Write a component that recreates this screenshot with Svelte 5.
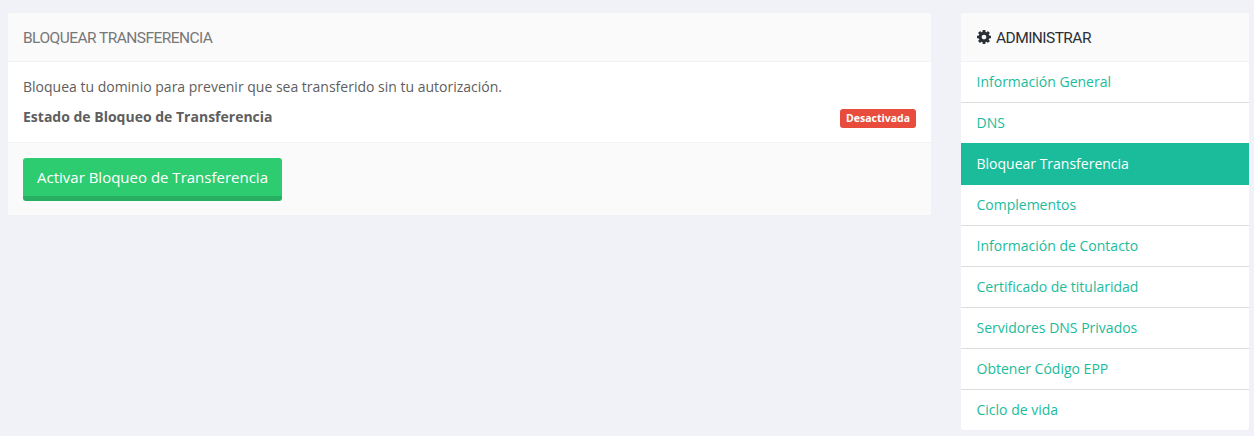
<script>
    let links = [
        'Información General',
        'DNS',
        'Bloquear Transferencia',
        'Complementos',
        'Información de Contacto',
        'Certificado de titularidad',
        'Servidores DNS Privados',
        'Obtener Código EPP',
        'Ciclo de vida'
    ];
    let active = 'Bloquear Transferencia';
</script>

<div class="page">
    <main class="card">
        <div class="card-head">
            <h3>Bloquear Transferencia</h3>
        </div>
        <div class="card-body">
            <p>Bloquea tu dominio para prevenir que sea transferido sin tu autorización.</p>
            <div class="status">
                <strong>Estado de Bloqueo de Transferencia</strong>
                <span class="badge">Desactivada</span>
            </div>
        </div>
        <div class="card-foot">
            <button class="btn">Activar Bloqueo de Transferencia</button>
        </div>
    </main>

    <aside class="side">
        <div class="side-head">
            <svg class="cog" viewBox="128 128 1536 1536" aria-hidden="true">
                <path d="M1152 896q0-106-75-181t-181-75-181 75-75 181 75 181 181 75 181-75 75-181zm512-109v222q0 12-8 23t-20 13l-185 28q-19 54-39 91 35 50 107 138 10 12 10 25t-9 23q-27 37-99 108t-94 71q-12 0-26-9l-138-108q-44 23-91 38-16 136-29 186-7 27-36 27h-222q-14 0-24.5-8.5t-11.5-21.5l-28-184q-49-16-90-37l-141 107q-10 9-25 9-14 0-25-11-126-114-165-168-7-10-7-23 0-12 8-23 15-21 51-66.5t54-70.5q-27-50-41-99l-183-27q-13-2-21-12.5t-8-23.5v-222q0-12 8-23t19-13l186-28q14-46 39-92-40-57-107-138-10-12-10-24 0-10 9-23 26-36 98.5-107.5t94.5-71.5q13 0 26 10l138 107q44-23 91-38 16-136 29-186 7-27 36-27h222q14 0 24.5 8.5t11.5 21.5l28 184q49 16 90 37l142-107q9-9 24-9 13 0 25 10 129 119 165 170 7 8 7 22 0 12-8 23-15 21-51 66.5t-54 70.5q26 50 41 98l183 28q13 2 21 12.5t8 23.5z"/>
            </svg>
            <h3>Administrar</h3>
        </div>
        <nav>
            {#each links as link}
                <a href="#top" class:active={link === active}>{link}</a>
            {/each}
        </nav>
    </aside>
</div>

<style>
    :global(body) {
        background: #f0f2f7;
        font-family: 'Open Sans', sans-serif;
        font-size: 14px;
        color: #5e5e5e;
    }
    .page {
        display: flex;
        align-items: flex-start;
        padding: 13px 5px 6px 8px;
        gap: 30px;
    }
    .card {
        flex: 1;
        min-width: 0;
        background: #fff;
        border-radius: 3px;
        overflow: hidden;
    }
    .card-head, .side-head {
        height: 48px;
        display: flex;
        align-items: center;
        padding: 0 15px;
        background: #fafafa;
        border-bottom: 1px solid #f0f2f7;
    }
    h3 {
        margin: 0;
        padding-top: 2px;
        font-family: 'Roboto', sans-serif;
        font-size: 15.5px;
        font-weight: 400;
        letter-spacing: -0.55px;
        text-transform: uppercase;
        color: #777;
    }
    .card-body {
        height: 80px;
        box-sizing: border-box;
        padding: 15px 15px 0;
    }
    p {
        margin: 0;
        line-height: 20px;
    }
    .status {
        display: flex;
        justify-content: space-between;
        align-items: center;
        margin-top: 10px;
    }
    .badge {
        position: relative;
        top: 2px;
        background: #e74c3c;
        color: #fff;
        font-size: 10.5px;
        font-weight: 700;
        line-height: 13px;
        padding: 3px 6px;
        border-radius: 3px;
    }
    .card-foot {
        height: 73px;
        box-sizing: border-box;
        padding: 15px;
        background: #fafafa;
        border-top: 1px solid #f0f2f7;
    }
    .btn {
        display: block;
        height: 43px;
        padding: 0 14px;
        border: 0;
        border-bottom: 5px solid #27ae60;
        border-radius: 3px;
        background: #2ecc71;
        color: #fff;
        font-family: inherit;
        font-size: 15px;
    }
    .side {
        width: 288px;
        flex: none;
        background: #fff;
        border-radius: 3px;
        overflow: hidden;
    }
    .side-head {
        gap: 5.5px;
    }
    .side-head h3 {
        color: #2b2f36;
    }
    .cog {
        width: 14px;
        height: 14px;
        margin: 0 0 0 0.5px;
        fill: #2b2f36;
    }
    nav {
        display: flex;
        flex-direction: column;
    }
    nav a {
        height: 41px;
        box-sizing: border-box;
        display: flex;
        align-items: center;
        padding: 0 15px 1px 15.5px;
        color: #1abc9c;
        text-decoration: none;
        border-top: 1px solid #ddd;
    }
    nav a:first-child {
        height: 40px;
        border-top: 0;
    }
    nav a.active {
        background: #1abc9c;
        color: #fff;
        border-top-color: #1abc9c;
    }
    nav a.active + a {
        border-top-color: #1abc9c;
    }
</style>
